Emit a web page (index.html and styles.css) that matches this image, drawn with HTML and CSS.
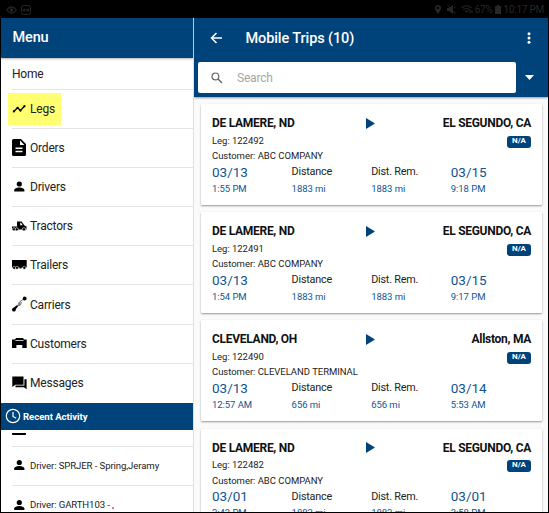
FILE: index.html
```html
<!DOCTYPE html>
<html lang="en">
<head>
<meta charset="utf-8">
<title>Mobile Trips</title>
<link rel="stylesheet" href="styles.css">
</head>
<body>
<div class="device">
  <div class="status">
    <svg width="11" height="10" viewBox="0 0 11 10"><path d="M.7 5Q5.5-1.2 10.3 5 5.5 11.2.7 5Z" fill="none" stroke="currentColor" stroke-width="1.2"/><circle cx="5.5" cy="5" r="1.7" fill="currentColor"/></svg>
    <svg width="10" height="10" viewBox="0 0 10 10"><rect x=".6" y=".6" width="8.8" height="8.8" rx="1.5" fill="none" stroke="currentColor"/><path d="M1.5 5 3.5 3v1.4h3V3l2 2-2 2V5.6h-3V7Z" fill="currentColor"/></svg>
    <span class="spacer"></span>
    <svg class="pin" width="6" height="9" viewBox="0 0 6 9"><path fill-rule="evenodd" d="M3 0a3 3 0 0 0-3 3c0 2 3 6 3 6s3-4 3-6a3 3 0 0 0-3-3Zm0 1.8a1.2 1.2 0 1 1 0 2.4 1.2 1.2 0 0 1 0-2.4Z" fill="currentColor"/></svg>
    <svg class="mute" width="9" height="9" viewBox="0 0 9 9"><path d="M0 3h2l4-3v9L2 6H0Z" fill="currentColor"/><path d="M.5.5l8 8M7 3l1.5-1" stroke="currentColor"/></svg>
    <svg class="wifi" width="12" height="9" viewBox="0 0 12 9"><path d="M.5 3Q5.5-1.5 10.5 3M2.3 5Q5.5 2 8.7 5M4 6.8q1.5-1.3 3 0" fill="none" stroke="currentColor" stroke-width="1.1"/><path d="M9 5v3M11 5v3" stroke="currentColor"/></svg>
    <span class="pct">67%</span>
    <svg class="batt" width="6" height="9" viewBox="0 0 6 9"><path d="M2 0h2v1h2v8H0V1h2Z" fill="currentColor"/></svg>
    <span class="clock">10:17 PM</span>
  </div>
  <div class="panes">
    <nav class="menu">
      <h1 class="menu-title">Menu</h1>
      <ul class="items">
        <li class="home">Home</li>
        <li class="active"><span class="mark"><svg class="ic" viewBox="0 0 15 18"><path d="M1.8 11.6 5.6 7.7l2.8 2.9 4-4.4" fill="none" stroke="#000" stroke-width="1.4"/><g><circle cx="1.9" cy="11.4" r="1.1"/><circle cx="5.6" cy="7.8" r="1.1"/><circle cx="8.4" cy="10.6" r="1.1"/><circle cx="12.5" cy="6.2" r="1.1"/></g></svg>Legs</span></li>
        <li><svg class="ic" viewBox="0 0 15 18"><path fill-rule="evenodd" d="M1.500 0H9l5 5v10.500q0 1.500-1.500 1.500h-11Q0 17 0 15.500v-14Q0 0 1.500 0ZM8 1.500V6h4.500ZM3.500 8.500V10h7V8.500Zm0 3.300v1.500h7v-1.500Z"/></svg>Orders</li>
        <li><svg class="ic" viewBox="0 0 15 18"><circle cx="7.300" cy="6" r="2.600"/><path d="M2.200 13.500v-1.500c0-1.800 3.300-2.600 5.100-2.600s5.100.8 5.100 2.600v1.500Z"/></svg>Drivers</li>
        <li><svg class="ic" viewBox="0 0 15 18"><path fill-rule="evenodd" d="M0 9.500h5V4.500h4.500l3 4 2 1v3H0ZM8.200 5.700v2.500h2.500L9 5.700Z"/><g stroke="#fff" stroke-width=".6"><circle cx="2" cy="12.300" r="1.600"/><circle cx="4.800" cy="12.300" r="1.600"/><circle cx="12" cy="12.300" r="1.700"/></g></svg>Tractors</li>
        <li><svg class="ic" viewBox="0 0 15 18"><path d="M0 4h14.700v7.500H0Z"/><g stroke="#fff" stroke-width=".5"><circle cx="2.200" cy="11.800" r="1.500"/><circle cx="5" cy="11.800" r="1.500"/><circle cx="12.300" cy="11.800" r="1.500"/></g><path d="M7.500 11h2v1.500h-2Z"/></svg>Trailers</li>
        <li><svg class="ic carrier" viewBox="0 0 15 18"><path d="m1.500 13.700 4-3.700 2-4 5.300-3.800M5.500 10l3-1 .8-3" fill="none" stroke="#444" stroke-width=".8"/><path d="m1 12.300 3.700-3.100 1.300 1.300-3.500 4.200Z"/><circle cx="1.900" cy="13.700" r="1.900"/><circle cx="12.700" cy="2.500" r="1.900"/><circle cx="7.400" cy="8" r="1.400" fill="#888"/></svg>Carriers</li>
        <li><svg class="ic" viewBox="0 0 15 18"><path fill-rule="evenodd" d="M0 4.500h3l1-1.500h7l1 1.500h2.700v8.500H10.300v-3H4.400v3H0ZM3.500 5v.8h8V5Z"/></svg>Customers</li>
        <li><svg class="ic" viewBox="0 0 15 18"><path d="M.3 2.500h11.200v8.200H3.300L.3 13ZM12.400 5.200h2.200v10L12 13.200H3.500v-1.700h8.900Z"/></svg>Messages</li>
      </ul>
      <h2 class="recent"><svg width="16" height="16" viewBox="0 0 16 16"><circle cx="8" cy="8" r="6.700" fill="none" stroke="#fff" stroke-width="1.200"/><path d="M8 4v4.500l3.200 1.800" fill="none" stroke="#fff" stroke-width="1.200"/></svg>Recent Activity</h2>
      <ul class="items log">
        <li class="cut"><i></i></li>
        <li><svg class="ic" viewBox="0 0 15 18"><circle cx="7.300" cy="6.500" r="2.600"/><path d="M2.200 14v-1.500c0-1.800 3.300-2.600 5.100-2.600s5.100.8 5.100 2.600V14Z"/></svg>Driver: SPRJER - Spring,Jeramy</li>
        <li><svg class="ic" viewBox="0 0 15 18"><circle cx="7.300" cy="6.500" r="2.600"/><path d="M2.200 14v-1.500c0-1.800 3.300-2.600 5.100-2.600s5.100.8 5.100 2.600V14Z"/></svg>Driver: GARTH103 - ,</li>
      </ul>
    </nav>
    <main class="trips">
      <header class="bar">
        <div class="heading">
          <svg width="13" height="12" viewBox="0 0 13 12"><path d="M12 6H1.500M6.500 1l-5 5 5 5" fill="none" stroke="#fff" stroke-width="1.500"/></svg>
          <h1>Mobile Trips (10)</h1>
          <svg width="4" height="12" viewBox="0 0 4 12" fill="#fff"><circle cx="2" cy="1.800" r="1.500"/><circle cx="2" cy="6" r="1.500"/><circle cx="2" cy="10.200" r="1.500"/></svg>
        </div>
        <div class="find">
          <div class="search"><svg width="12" height="12" viewBox="0 0 12 12"><circle cx="4.400" cy="4.400" r="3.400" fill="none" stroke="#666" stroke-width="1.200"/><path d="m7 7 4 4" stroke="#666" stroke-width="1.500"/></svg>Search</div>
          <svg width="9" height="5" viewBox="0 0 9 5"><path d="M0 0h9L4.500 5Z" fill="#fff"/></svg>
        </div>
      </header>
      <div class="list">
        <article class="card">
          <div class="route"><b>DE LAMERE, ND</b><svg class="play" viewBox="0 0 9 11"><path d="M0 0 9 5.500 0 11Z"/></svg><b>EL SEGUNDO, CA</b></div>
          <p>Leg: 122492<span class="badge">N/A</span></p>
          <p>Customer: ABC COMPANY</p>
          <div class="facts"><span class="date">03/13</span><span>Distance</span><span>Dist. Rem.</span><span class="date">03/15</span></div>
          <div class="facts values"><span>1:55 PM</span><span>1883 mi</span><span>1883 mi</span><span>9:18 PM</span></div>
        </article>
        <article class="card">
          <div class="route"><b>DE LAMERE, ND</b><svg class="play" viewBox="0 0 9 11"><path d="M0 0 9 5.500 0 11Z"/></svg><b>EL SEGUNDO, CA</b></div>
          <p>Leg: 122491<span class="badge">N/A</span></p>
          <p>Customer: ABC COMPANY</p>
          <div class="facts"><span class="date">03/13</span><span>Distance</span><span>Dist. Rem.</span><span class="date">03/15</span></div>
          <div class="facts values"><span>1:54 PM</span><span>1883 mi</span><span>1883 mi</span><span>9:17 PM</span></div>
        </article>
        <article class="card">
          <div class="route"><b>CLEVELAND, OH</b><svg class="play" viewBox="0 0 9 11"><path d="M0 0 9 5.500 0 11Z"/></svg><b>Allston, MA</b></div>
          <p>Leg: 122490<span class="badge">N/A</span></p>
          <p>Customer: CLEVELAND TERMINAL</p>
          <div class="facts"><span class="date">03/13</span><span>Distance</span><span>Dist. Rem.</span><span class="date">03/14</span></div>
          <div class="facts values"><span>12:57 AM</span><span>656 mi</span><span>656 mi</span><span>5:53 AM</span></div>
        </article>
        <article class="card">
          <div class="route"><b>DE LAMERE, ND</b><svg class="play" viewBox="0 0 9 11"><path d="M0 0 9 5.500 0 11Z"/></svg><b>EL SEGUNDO, CA</b></div>
          <p>Leg: 122482<span class="badge">N/A</span></p>
          <p>Customer: ABC COMPANY</p>
          <div class="facts"><span class="date">03/01</span><span>Distance</span><span>Dist. Rem.</span><span class="date">03/01</span></div>
          <div class="facts values"><span>2:43 PM</span><span>1883 mi</span><span>1883 mi</span><span>3:58 PM</span></div>
        </article>
      </div>
    </main>
  </div>
</div>
</body>
</html>
```

FILE: styles.css
```css
* { box-sizing: border-box; margin: 0; padding: 0; }
body { width: 549px; height: 513px; overflow: hidden; background: #000; font-family: Roboto, sans-serif; color: #222; }
svg { display: block; flex: none; }
.device { width: 549px; height: 513px; padding: 0 1px 1px; display: flex; flex-direction: column; }
.status { height: 18px; flex: none; display: flex; align-items: center; padding: 1px 4px 0 5px; gap: 4px; color: #272727; font-size: 10px; letter-spacing: -.25px; }
.spacer { flex: 1; }
.pin { margin-right: 2px; }
.mute { margin-right: 1px; }
.pct { margin-left: -2px; }
.batt { margin: 0 -1px 0 -2px; }
.panes { flex: 1; min-height: 0; display: flex; overflow: hidden; }
.menu { width: 193px; flex: none; background: #fff; border-right: 1px solid #dcdfe3; }
.menu-title { height: 40px; padding-left: 11.5px; background: #00427a; color: #fff; font-size: 14.5px; font-weight: 500; letter-spacing: -.15px; line-height: 40px; box-shadow: 0 1px 2px rgba(0, 0, 0, .3); }
.items { list-style: none; padding-left: 11px; }
.items li { height: 39.1px; display: flex; align-items: center; border-bottom: 1px solid #e4e4e4; font-size: 12px; letter-spacing: -.2px; }
.items li.home { height: 32px; }
.items li:last-child { border-bottom: 0; }
.ic { width: 15px; height: 18px; margin-right: 3px; }
.mark { display: flex; align-items: center; height: 32px; margin-left: -4px; padding: 0 6.5px 0 4px; background: #ffff70; }
.recent { height: 27px; display: flex; align-items: center; gap: 2px; padding-left: 4px; background: #00427a; color: #fff; font-size: 9.6px; font-weight: 700; letter-spacing: -.05px; }
.log li { font-size: 9.6px; letter-spacing: -.1px; }
.log li.cut { height: 17.5px; align-items: flex-start; }
.log li + li { padding-bottom: 2px; }
.cut i { width: 14px; height: 2px; margin-top: 3px; background: #000; border-radius: 0 0 1px 1px; }
.trips { flex: 1; min-width: 0; background: #fafafa; overflow: hidden; }
.bar { height: 79px; background: #00427a; box-shadow: 0 1px 2px rgba(0, 0, 0, .4); }
.heading { height: 40px; display: flex; align-items: center; padding: 0 17px 0 16px; color: #fff; }
.heading h1 { flex: 1; margin-left: 22.5px; font-size: 14.5px; font-weight: 500; letter-spacing: -.1px; }
.find { display: flex; align-items: center; justify-content: space-between; padding: 4px 14px 0 4px; }
.search { width: 318px; height: 31px; display: flex; align-items: center; gap: 14px; padding-left: 13px; background: #fff; border-radius: 2px; color: #a5a5a5; font-size: 12px; letter-spacing: -.2px; }
.list { padding: 7px 6px 0 7px; display: flex; flex-direction: column; gap: 7.2px; }
.card { height: 101px; flex: none; padding: 10px 11px 0; background: #fff; border-radius: 1px; box-shadow: 0 1px 2px rgba(0, 0, 0, .4); }
.route { height: 18px; display: grid; grid-template-columns: 1fr 9px 1fr; align-items: center; color: #111; font-size: 12px; letter-spacing: -.28px; }
.route b { font-weight: 700; white-space: nowrap; }
.route b:last-child { text-align: right; }
.play { width: 9px; height: 11px; margin-left: -1px; fill: #00427a; }
.card p { height: 15px; display: flex; justify-content: space-between; align-items: center; font-size: 9.5px; letter-spacing: -.03px; }
.route + p { padding-top: 1px; margin-bottom: 1px; }
.badge { width: 24px; height: 12px; margin-top: 3px; border-radius: 3px; background: #00427a; color: #fff; font-size: 8px; font-weight: 700; line-height: 10.5px; text-align: center; }
.facts { height: 17px; display: grid; grid-template-columns: repeat(4, 79.6px); align-items: center; font-size: 10.8px; letter-spacing: -.2px; white-space: nowrap; }
.facts .date { color: #0f5591; font-size: 13.5px; letter-spacing: 0; }
.values { height: 16px; color: #0f5591; font-size: 9.5px; letter-spacing: -.05px; }
```
